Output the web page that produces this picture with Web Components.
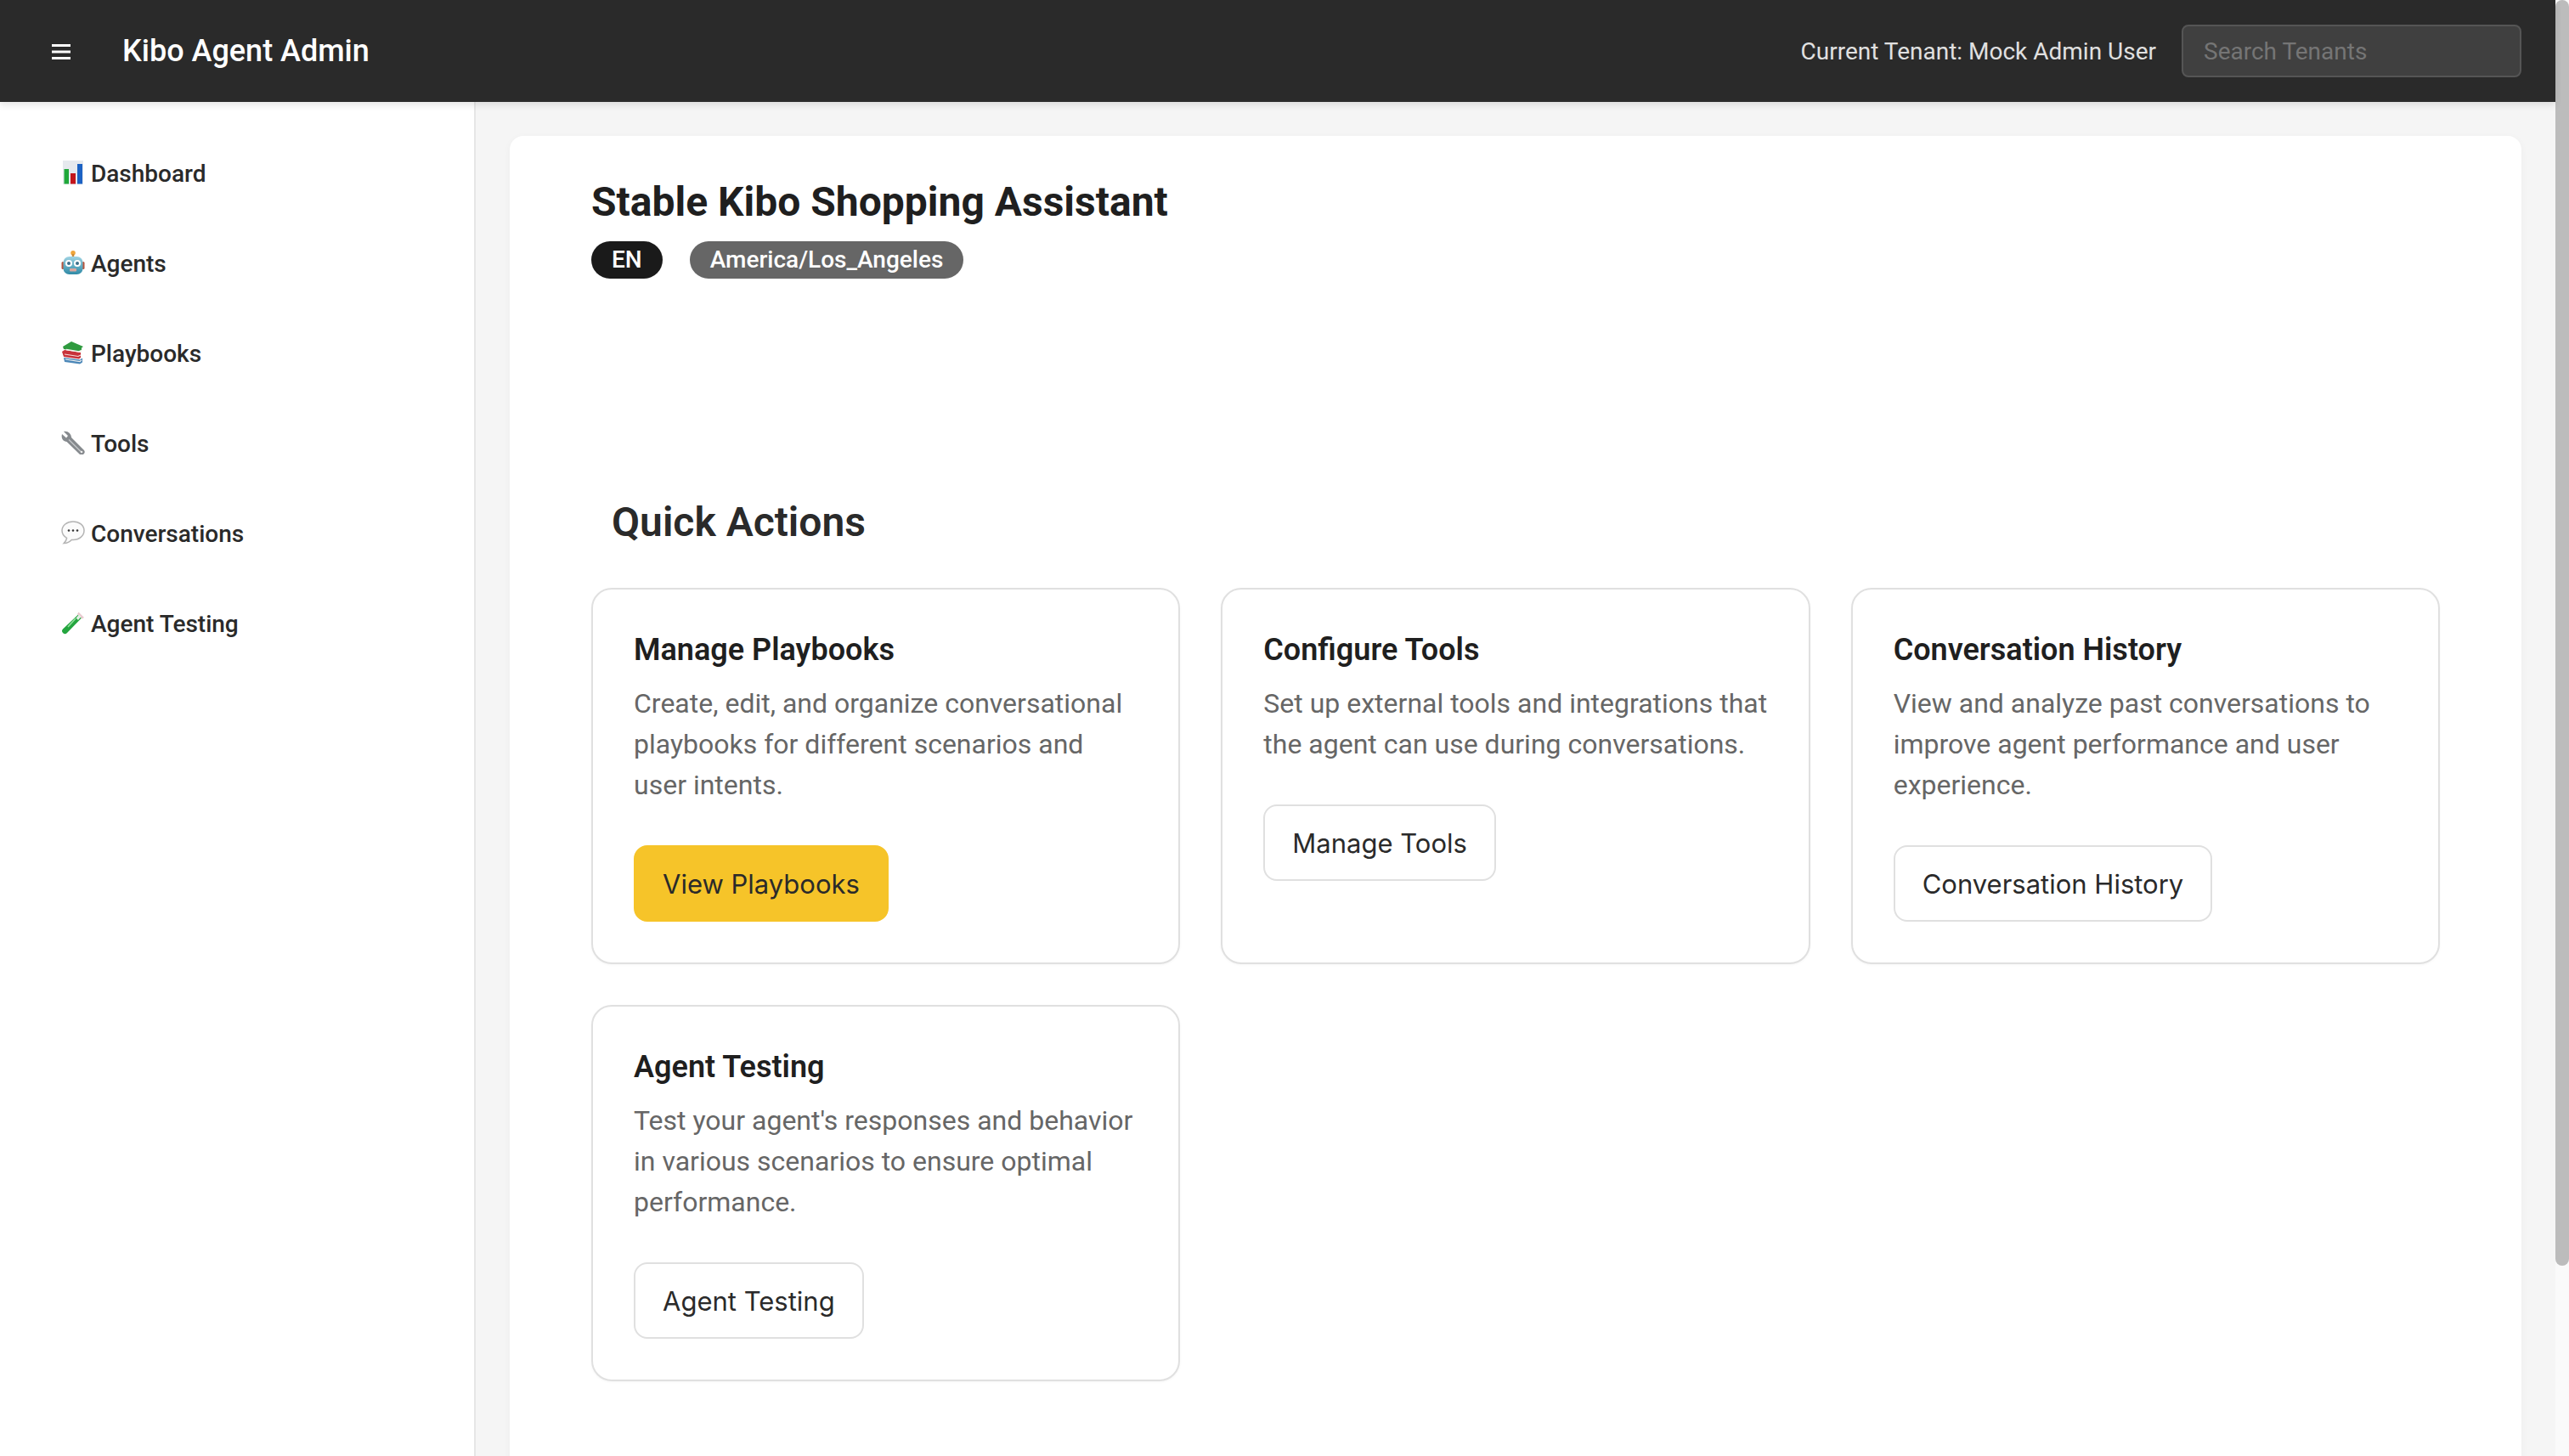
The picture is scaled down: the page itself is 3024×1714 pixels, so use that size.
<!DOCTYPE html>
<html lang="en">
<head>
<meta charset="utf-8">
<title>Kibo Agent Admin</title>
<style>
    html, body { margin: 0; height: 100%; overflow: hidden; }
    body { font-family: Roboto, "Liberation Sans", sans-serif; background: #f5f5f5; color: #2a2a2a; }
</style>
</head>
<body>
<kibo-app>
    <kibo-header slot="header" tenant="Current Tenant: Mock Admin User" title-text="Kibo Agent Admin"></kibo-header>
    <kibo-sidebar slot="sidebar">
        <nav-item icon="chart">Dashboard</nav-item>
        <nav-item icon="robot">Agents</nav-item>
        <nav-item icon="books">Playbooks</nav-item>
        <nav-item icon="wrench">Tools</nav-item>
        <nav-item icon="bubble">Conversations</nav-item>
        <nav-item icon="tube">Agent Testing</nav-item>
    </kibo-sidebar>
    <agent-panel name="Stable Kibo Shopping Assistant">
        <kibo-badge slot="badges" tone="dark">EN</kibo-badge>
        <kibo-badge slot="badges" tone="gray">America/Los_Angeles</kibo-badge>
        <action-card heading="Manage Playbooks" action="View Playbooks" primary>Create, edit, and organize conversational playbooks for different scenarios and user intents.</action-card>
        <action-card heading="Configure Tools" action="Manage Tools">Set up external tools and integrations that the agent can use during conversations.</action-card>
        <action-card heading="Conversation History" action="Conversation History">View and analyze past conversations to improve agent performance and user experience.</action-card>
        <action-card heading="Agent Testing" action="Agent Testing">Test your agent's responses and behavior in various scenarios to ensure optimal performance.</action-card>
    </agent-panel>
</kibo-app>

<script>
// Colour emoji used in the sidebar, drawn on a 28x28 box
const ICONS = {
    chart: `<rect x="2" y="0" width="24" height="28" fill="#e6e9ee"/>
        <rect x="3.5" y="10" width="5.5" height="17.5" fill="#1fa83a"/>
        <rect x="11" y="15" width="6" height="12.5" fill="#c4161c"/>
        <rect x="19" y="4" width="6" height="23.5" fill="#1c62c4"/>`,
    robot: `<circle cx="14" cy="2.8" r="2.8" fill="#f0a63c"/>
        <rect x="12.8" y="4" width="2.4" height="4" fill="#c98a3a"/>
        <rect x="0.5" y="13" width="3" height="9" rx="1.5" fill="#b5533c"/>
        <rect x="24.5" y="13" width="3" height="9" rx="1.5" fill="#b5533c"/>
        <rect x="2.5" y="7" width="23" height="21" rx="7" fill="url(#robotFace)"/>
        <defs><linearGradient id="robotFace" x1="0" y1="0" x2="0" y2="1"><stop offset="0" stop-color="#9fd3e3"/><stop offset="1" stop-color="#2f8aa6"/></linearGradient></defs>
        <circle cx="9" cy="15" r="4" fill="#fff"/><circle cx="19" cy="15" r="4" fill="#fff"/>
        <circle cx="9" cy="15" r="2" fill="#3b6f8c"/><circle cx="19" cy="15" r="2" fill="#3b6f8c"/>
        <rect x="10" y="21" width="8" height="3.5" rx="1" fill="#d8a7a0"/>`,
    books: `<path d="M3 20l19 2.500 3-2v5l-3 2L4 25z" fill="#4b87b8"/>
        <path d="M5 22l17 2.500 2-1.500" fill="none" stroke="#f0f0f0" stroke-width="1.2"/>
        <path d="M1 13l3-2 19 3v6l-2 1.500L3 19z" fill="#c8323a"/>
        <path d="M4 16l16 2.500 3-1.500" fill="none" stroke="#f4d9d9" stroke-width="1.2"/>
        <path d="M2 7l10-6 14 6-2 1.500v3L22 13 3 10z" fill="#2f9a3f"/>
        <path d="M6 10.500l15 2.500 3-1.500" fill="none" stroke="#f4f4ee" stroke-width="1.6"/>`,
    wrench: `<path d="M3 1 8 6 6 8.500 1 4C-.3 8.500 2 12.500 6.500 13L21.500 27.500a3.200 3.200 0 0 0 5-5L12 8C12 3.500 7.500 0 3 1z" fill="#868a8e"/>
        <path d="M9 10.500 23 24.500" stroke="#c4c6c9" stroke-width="1.400"/>
        <circle cx="24" cy="25" r="1.300" fill="#eee"/>`,
    bubble: `<path d="M14 1C6.800 1 1 5.600 1 11.500c0 3.700 2.200 6.900 5.600 8.800-.3 2.200-1.600 4.300-3.400 6.200 3.900-.3 7-1.800 9.100-4.100.6.100 1.200.1 1.700.1 7.200 0 13-4.700 13-11S21.200 1 14 1z" fill="#fbfbfb" stroke="#b4b4b4" stroke-width="1.500"/>
        <circle cx="9" cy="11.500" r="1.300" fill="#333"/><circle cx="14" cy="11.500" r="1.300" fill="#333"/><circle cx="19" cy="11.500" r="1.300" fill="#333"/>`,
    tube: `<path d="M20 4.500 24 8.500 7 26a3 3 0 0 1-5-4.500z" fill="#24a53f"/>
        <path d="M17 9 8 19" stroke="#8fe09a" stroke-width="1.600"/>
        <path d="M20.500 1.500 27 8l-2.500 1.500L19 4z" fill="#e8c8cd"/>
        <path d="M21 4.500 23.500 7 20 11 17.500 8.500z" fill="#e3eee5"/>`
};

class KiboApp extends HTMLElement {
    constructor() {
        super();
        this.attachShadow({ mode: 'open' });
        this.shadowRoot.innerHTML = `
        <style>
        :host { display: flex; height: 1714px; width: 3024px; overflow: hidden; }
        .page { flex: 1; min-width: 0; display: flex; flex-direction: column; }
        .body { flex: 1; min-height: 0; display: flex; }
        .content { flex: 1; min-width: 0; padding: 40px; overflow: hidden; background: #f5f5f5; }
        .track { flex: 0 0 16px; background: #fafafa; }
        .thumb { height: 1490px; background: #bcbcbc; border-radius: 8px; }
        </style>
        <div class="page">
            <slot name="header"></slot>
            <div class="body">
                <slot name="sidebar"></slot>
                <div class="content"><slot></slot></div>
            </div>
        </div>
        <div class="track"><div class="thumb"></div></div>
        `;
    }
}

class KiboHeader extends HTMLElement {
    connectedCallback() {
        this.attachShadow({ mode: 'open' });
        this.shadowRoot.innerHTML = `
        <style>
        :host { display: flex; align-items: center; flex: 0 0 120px; height: 120px; padding: 0 40px 0 61px;
            background: #2a2a2a; color: #fff; position: relative; z-index: 2; box-shadow: 0 4px 8px rgba(0, 0, 0, 0.1); }
        svg { display: block; margin-right: 61px; margin-top: 2px; }
        .title { font-size: 36px; font-weight: 500; }
        .tenant { margin-left: auto; margin-right: 30px; font-size: 28px; color: #e0e0e0; }
        input { box-sizing: border-box; width: 400px; height: 62px; padding: 0 24px; font: 400 28px Roboto, sans-serif;
            color: #fff; background: #404040; border: 2px solid #555; border-radius: 8px; outline: none; }
        input::placeholder { color: #757575; opacity: 1; }
        </style>
        <svg width="22" height="18" viewBox="0 0 22 18"><path d="M0 1.500h22M0 9h22M0 16.500h22" stroke="#fff" stroke-width="3"/></svg>
        <span class="title">${this.getAttribute('title-text')}</span>
        <span class="tenant">${this.getAttribute('tenant')}</span>
        <input type="text" placeholder="Search Tenants">
        `;
    }
}

class KiboSidebar extends HTMLElement {
    constructor() {
        super();
        this.attachShadow({ mode: 'open' });
        this.shadowRoot.innerHTML = `
        <style>
        :host { display: block; box-sizing: border-box; flex: 0 0 560px; width: 560px; padding-top: 31px;
            background: #fff; border-right: 2px solid #e6e6e6; box-shadow: 2px 0 4px rgba(0, 0, 0, 0.03); }
        </style>
        <slot></slot>
        `;
    }
}

class NavItem extends HTMLElement {
    connectedCallback() {
        this.attachShadow({ mode: 'open' });
        this.shadowRoot.innerHTML = `
        <style>
        :host { display: flex; align-items: center; height: 106px; padding-left: 72px; font-size: 28px; font-weight: 500; color: #2a2a2a; }
        svg { flex: none; margin-right: 7px; margin-top: -3px; }
        </style>
        <svg width="28" height="28" viewBox="0 0 28 28">${ICONS[this.getAttribute('icon')]}</svg>
        <slot></slot>
        `;
    }
}

class AgentPanel extends HTMLElement {
    connectedCallback() {
        this.attachShadow({ mode: 'open' });
        this.shadowRoot.innerHTML = `
        <style>
        :host { display: block; box-sizing: border-box; min-height: 1700px; padding: 50px 96px 48px; background: #fff;
            border-radius: 16px; box-shadow: 0 2px 8px rgba(0, 0, 0, 0.04); }
        h1 { margin: 0; font-size: 48px; line-height: 56px; font-weight: 700; color: #1f1f1f; }
        .badges { display: flex; gap: 32px; margin-top: 18px; }
        h2 { margin: 259px 0 0 24px; font-size: 48px; line-height: 56px; font-weight: 600; color: #2a2a2a; }
        .grid { display: grid; grid-template-columns: repeat(3, 1fr); gap: 48px; margin-top: 49px; }
        </style>
        <h1>${this.getAttribute('name')}</h1>
        <div class="badges"><slot name="badges"></slot></div>
        <h2>Quick Actions</h2>
        <div class="grid"><slot></slot></div>
        `;
    }
}

class KiboBadge extends HTMLElement {
    connectedCallback() {
        this.attachShadow({ mode: 'open' });
        const bg = this.getAttribute('tone') === 'dark' ? '#1a1a1a' : '#666';
        this.shadowRoot.innerHTML = `
        <style>
        :host { display: block; height: 44px; line-height: 44px; padding: 0 24px; border-radius: 22px;
            background: ${bg}; color: #fff; font-size: 28px; font-weight: 500; }
        </style>
        <slot></slot>
        `;
    }
}

class ActionCard extends HTMLElement {
    connectedCallback() {
        this.attachShadow({ mode: 'open' });
        const primary = this.hasAttribute('primary');
        this.shadowRoot.innerHTML = `
        <style>
        :host { display: block; box-sizing: border-box; height: 443px; padding: 50px 48px 0; background: #fff;
            border: 2px solid #e0e0e0; border-radius: 24px; box-shadow: 0 1px 3px rgba(0, 0, 0, 0.04); }
        h3 { margin: 0 0 18px; font-size: 36px; line-height: 42px; font-weight: 600; color: #1f1f1f; }
        p { margin: 0 0 47px; font-size: 32px; line-height: 48px; color: #666; }
        </style>
        <h3>${this.getAttribute('heading')}</h3>
        <p><slot></slot></p>
        <kibo-button ${primary ? 'primary' : ''}>${this.getAttribute('action')}</kibo-button>
        `;
    }
}

class KiboButton extends HTMLElement {
    constructor() {
        super();
        this.attachShadow({ mode: 'open' });
        this.shadowRoot.innerHTML = `
        <style>
        :host { display: inline-block; box-sizing: border-box; height: 90px; line-height: 87px; padding: 0 32px;
            background: #fff; border: 2px solid #e0e0e0; border-radius: 16px; font-family: Inter, Roboto, sans-serif; font-size: 31px; color: #2a2a2a; }
        :host([primary]) { background: #f6c429; border-color: #f6c429; }
        </style>
        <slot></slot>
        `;
    }
}

customElements.define('kibo-app', KiboApp);
customElements.define('kibo-header', KiboHeader);
customElements.define('kibo-sidebar', KiboSidebar);
customElements.define('nav-item', NavItem);
customElements.define('agent-panel', AgentPanel);
customElements.define('kibo-badge', KiboBadge);
customElements.define('action-card', ActionCard);
customElements.define('kibo-button', KiboButton);
</script>
</body>
</html>
